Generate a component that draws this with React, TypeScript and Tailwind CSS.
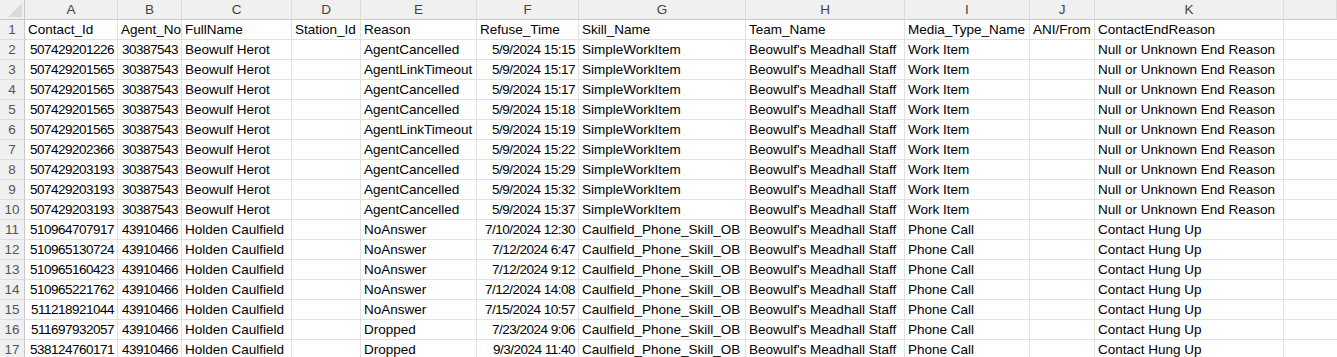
import React from "react";

const letters = ["A", "B", "C", "D", "E", "F", "G", "H", "I", "J", "K", ""];

type Row = string[];
const B = (id: string, reason: string, time: string): Row => [
  id, "30387543", "Beowulf Herot", "", reason, time, "SimpleWorkItem", "Beowulf's Meadhall Staff", "Work Item", "", "Null or Unknown End Reason",
];
const H = (id: string, reason: string, time: string): Row => [
  id, "43910466", "Holden Caulfield", "", reason, time, "Caulfield_Phone_Skill_OB", "Beowulf's Meadhall Staff", "Phone Call", "", "Contact Hung Up",
];

const header: Row = ["Contact_Id", "Agent_No", "FullName", "Station_Id", "Reason", "Refuse_Time", "Skill_Name", "Team_Name", "Media_Type_Name", "ANI/From", "ContactEndReason"];

const data: Row[] = [
  B("507429201226", "AgentCancelled", "5/9/2024 15:15"),
  B("507429201565", "AgentLinkTimeout", "5/9/2024 15:17"),
  B("507429201565", "AgentCancelled", "5/9/2024 15:17"),
  B("507429201565", "AgentCancelled", "5/9/2024 15:18"),
  B("507429201565", "AgentLinkTimeout", "5/9/2024 15:19"),
  B("507429202366", "AgentCancelled", "5/9/2024 15:22"),
  B("507429203193", "AgentCancelled", "5/9/2024 15:29"),
  B("507429203193", "AgentCancelled", "5/9/2024 15:32"),
  B("507429203193", "AgentCancelled", "5/9/2024 15:37"),
  H("510964707917", "NoAnswer", "7/10/2024 12:30"),
  H("510965130724", "NoAnswer", "7/12/2024 6:47"),
  H("510965160423", "NoAnswer", "7/12/2024 9:12"),
  H("510965221762", "NoAnswer", "7/12/2024 14:08"),
  H("511218921044", "NoAnswer", "7/15/2024 10:57"),
  H("511697932057", "Dropped", "7/23/2024 9:06"),
  H("538124760171", "Dropped", "9/3/2024 11:40"),
];

const rightCols = new Set([0, 1, 5]);

const gridCols = "grid grid-cols-[25px_93px_64px_110px_69px_116px_102px_167px_159px_125px_65px_189px_1fr]";

export default function App() {
  const rows: Row[] = [header, ...data];
  return (
    <div
      className="w-[1337px] h-[357px] overflow-hidden bg-white text-[13.5px] text-black"
      style={{ fontFamily: "'Liberation Sans', Arial, sans-serif" }}
    >
      {/* column letters */}
      <div className={`${gridCols} h-[20px]`}>
        <div className="relative bg-[#f0f0f0] border-r border-b border-[#c8c8c8]">
          <svg className="absolute right-[2px] bottom-[2px]" width="14" height="14" viewBox="0 0 14 14">
            <polygon points="14,0 14,14 0,14" fill="#d9d9d9" />
          </svg>
        </div>
        {letters.map((l, i) => (
          <div
            key={i}
            className="bg-[#f0f0f0] border-r border-b border-[#c8c8c8] border-r-[#dcdcdc] flex items-center justify-center text-[#444] leading-[19px]"
          >
            {l}
          </div>
        ))}
      </div>
      {rows.map((r, ri) => (
        <div key={ri} className={`${gridCols} h-[20px]`}>
          <div className="bg-[#f0f0f0] border-r border-b border-[#c8c8c8] border-b-[#dcdcdc] text-[#555] flex items-center justify-center leading-[19px]">
            {ri + 1}
          </div>
          {r.map((c, ci) => (
            <div
              key={ci}
              className={`border-r border-b border-[#e1e1e1] px-[3px] leading-[19px] whitespace-nowrap overflow-visible ${
                ri > 0 && rightCols.has(ci) ? "text-right tracking-[-0.5px]" : "text-left"
              }`}
            >
              {c}
            </div>
          ))}
          <div className="border-b border-[#e1e1e1]" />
        </div>
      ))}
    </div>
  );
}
